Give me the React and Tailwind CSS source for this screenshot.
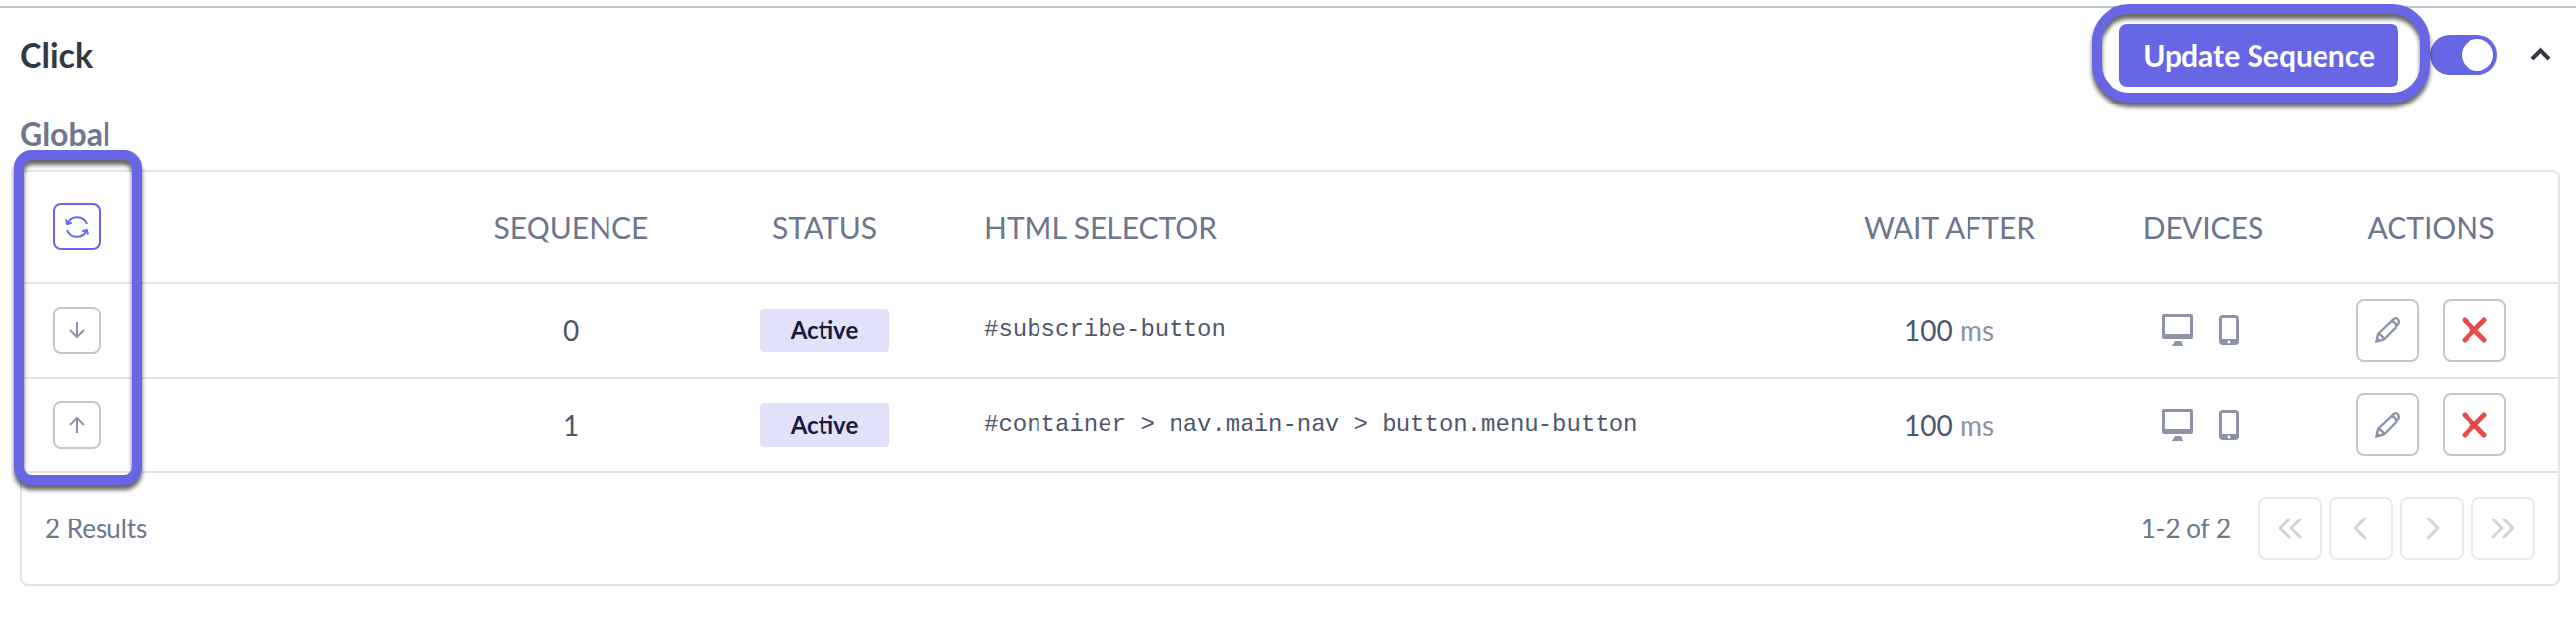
import { useState } from 'react'

const ROWS = [
  { id: 0, move: 'down', selector: '#subscribe-button', wait: 100 },
  { id: 1, move: 'up', selector: '#container > nav.main-nav > button.menu-button', wait: 100 },
]

const PAGER = [
  { label: 'First page', d: 'M15 7l-9 9 9 9M26 7l-9 9 9 9' },
  { label: 'Previous page', d: 'M20 6L10 16l10 10' },
  { label: 'Next page', d: 'M12 6l10 10-10 10' },
  { label: 'Last page', d: 'M6 7l9 9-9 9M17 7l9 9-9 9' },
]

function RefreshIcon() {
  return (
    <svg viewBox="0 0 24 24" className="size-6" fill="none" stroke="currentColor" strokeWidth="2" aria-hidden="true">
      <path d="M22 9A10.500 10.500 0 0 0 2.500 8.500M2 15A10.500 10.500 0 0 0 21.500 15.500" />
      <path d="M1 4.500L2.200 9l4.600-1.200M23 19.500L21.800 15l-4.600 1.200" />
    </svg>
  )
}

function MoveIcon({ dir }) {
  return (
    <svg viewBox="0 0 16 16" className="size-4" fill="none" stroke="currentColor" strokeWidth="2" aria-hidden="true">
      <path d={dir === 'down' ? 'M8 0v15M1 8l7 7 7-7' : 'M8 16V1M1 8l7-7 7 7'} />
    </svg>
  )
}

function DesktopIcon() {
  return (
    <svg viewBox="0 0 32 32" className="size-8" fill="currentColor" role="img" aria-label="Desktop">
      <path fillRule="evenodd" d="M2 0h28a2 2 0 0 1 2 2v21a2 2 0 0 1-2 2H2a2 2 0 0 1-2-2V2a2 2 0 0 1 2-2zM3 3v17h26V3z" />
      <path d="M13 27h6q1 3 3 4v1H10v-1q2-1 3-4z" />
    </svg>
  )
}

function MobileIcon() {
  return (
    <svg viewBox="0 0 32 32" className="size-8" fill="currentColor" role="img" aria-label="Mobile">
      <path fillRule="evenodd" d="M10 1h12a4 4 0 0 1 4 4v22a4 4 0 0 1-4 4H10a4 4 0 0 1-4-4V5a4 4 0 0 1 4-4zM9 4v21h14V4zM16 26.500a1.500 1.500 0 1 0 0 3 1.500 1.500 0 0 0 0-3z" />
    </svg>
  )
}

function PencilIcon() {
  return (
    <svg viewBox="0 0 26 26" className="size-6.5" fill="none" stroke="currentColor" strokeWidth="2.400" aria-hidden="true">
      <path d="M1.500 24.500l1.500-7.500L18.300 2.300a3.700 3.700 0 0 1 5.400 5.400L9 22.500zM17 4.500q3.500.5 4.500 4.500M3 17q4.500 1 6 5.500" />
      <path d="M1 25l1-5 4 4z" fill="currentColor" stroke="none" />
    </svg>
  )
}

export default function App() {
  const [enabled, setEnabled] = useState(true)
  const [open, setOpen] = useState(true)

  return (
    <div className="bg-white pt-1.5 font-['Lato',sans-serif] text-[#6e768e]">
      <section className="border-t-2 border-[#c3c7d3]">
        <header className="flex items-center py-4 pl-5 pr-5">
          <h2 className="text-[34px] font-bold leading-10 text-[#343845]">Click</h2>

          <div className="relative ml-auto">
            <button type="button" className="h-16 rounded-lg bg-[#6767e5] px-6 text-[30px] font-bold text-white">
              Update Sequence
            </button>
            <span className="pointer-events-none absolute -bottom-4 -left-7 -right-8 -top-5 rounded-[38px] border-10 border-[#6767e5] drop-shadow-[0_5px_2px_rgba(0,0,0,0.6)]" />
          </div>

          <input
            type="checkbox"
            role="switch"
            aria-label="Enable click sequence"
            checked={enabled}
            onChange={e => setEnabled(e.target.checked)}
            className="ml-8 flex h-10 w-17 appearance-none items-center rounded-full bg-[#c3c7d3] p-1 before:size-8 before:rounded-full before:bg-white checked:justify-end checked:bg-[#6767e5]"
          />
          <button type="button" aria-label="Toggle section" aria-expanded={open} onClick={() => setOpen(!open)} className="ml-7 text-[#343845]">
            <svg viewBox="0 0 32 32" className="size-8" fill="none" stroke="currentColor" strokeWidth="4" aria-hidden="true">
              <path d={open ? 'M7 20l9-9 9 9' : 'M7 11l9 9 9-9'} />
            </svg>
          </button>
        </header>

        {open && (
          <div className="pl-5 pr-4 pt-4">
            <h3 className="mb-5 text-[32px] font-bold leading-8">Global</h3>

            <div className="relative rounded-lg border-2 border-[#e2e3e9]">
              <table className="w-full table-fixed">
                <colgroup>
                  <col className="w-[438px]" />
                  <col className="w-[238px]" />
                  <col className="w-[276px]" />
                  <col />
                  <col className="w-[311px]" />
                  <col className="w-[204px]" />
                  <col className="w-[258px]" />
                </colgroup>
                <thead>
                  <tr className="h-[113px] border-b-2 border-[#e2e3e9] text-[30px] uppercase *:font-normal">
                    <th className="pl-8 text-left">
                      <button type="button" aria-label="Refresh" className="flex size-12 items-center justify-center rounded-lg border-2 border-[#6767e5] text-[#6767e5]">
                        <RefreshIcon />
                      </button>
                    </th>
                    <th>Sequence</th>
                    <th>Status</th>
                    <th className="px-6 text-left">HTML Selector</th>
                    <th>Wait After</th>
                    <th>Devices</th>
                    <th>Actions</th>
                  </tr>
                </thead>
                <tbody>
                  {ROWS.map(row => (
                    <tr key={row.id} className="h-24 border-b-2 border-[#e2e3e9] text-center text-[28px] text-[#4f566b]">
                      <td className="pl-8">
                        <button type="button" aria-label={`Move ${row.move}`} className="flex size-12 items-center justify-center rounded-lg border-2 border-[#c3c7d3] text-[#8d92a8]">
                          <MoveIcon dir={row.move} />
                        </button>
                      </td>
                      <td>{row.id}</td>
                      <td>
                        <span className="mx-auto flex h-11 w-[130px] items-center justify-center rounded bg-[#e1e1fa] text-2xl font-bold text-[#1b1a3d]">Active</span>
                      </td>
                      <td className="px-6 text-left font-['Liberation_Mono',monospace] text-2xl">{row.selector}</td>
                      <td>{row.wait} <span className="text-[#8d92a8]">ms</span></td>
                      <td>
                        <div className="flex justify-center gap-5 text-[#8d92a8]">
                          <DesktopIcon />
                          <MobileIcon />
                        </div>
                      </td>
                      <td>
                        <div className="flex justify-center gap-6">
                          <button type="button" aria-label="Edit" className="flex size-16 items-center justify-center rounded-lg border-2 border-[#c3c7d3] text-[#8d92a8]">
                            <PencilIcon />
                          </button>
                          <button type="button" aria-label="Delete" className="flex size-16 items-center justify-center rounded-lg border-2 border-[#c3c7d3] text-[#e84c4a]">
                            <svg viewBox="0 0 26 26" className="size-6.5" stroke="currentColor" strokeWidth="5" strokeLinecap="round" aria-hidden="true">
                              <path d="M3 3l20 20M23 3L3 23" />
                            </svg>
                          </button>
                        </div>
                      </td>
                    </tr>
                  ))}
                </tbody>
              </table>

              <footer className="flex items-center p-6 text-[26px]">
                <span>2 Results</span>
                <span className="ml-auto mr-7">1-2 of 2</span>
                <nav aria-label="Pagination" className="flex gap-2">
                  {PAGER.map(p => (
                    <button key={p.label} type="button" disabled aria-label={p.label} className="flex size-16 items-center justify-center rounded-lg border-2 border-[#e8e9ee] text-[#d1d3dc]">
                      <svg viewBox="0 0 32 32" className="size-8" fill="none" stroke="currentColor" strokeWidth="3" strokeLinecap="round" strokeLinejoin="round" aria-hidden="true">
                        <path d={p.d} />
                      </svg>
                    </button>
                  ))}
                </nav>
              </footer>

              {/* Highlight over the reorder column */}
              <span className="pointer-events-none absolute -left-2 -top-[22px] h-[340px] w-[130px] rounded-[18px] border-10 border-[#6767e5] drop-shadow-[0_5px_2px_rgba(0,0,0,0.6)]" />
            </div>
          </div>
        )}
      </section>
    </div>
  )
}
